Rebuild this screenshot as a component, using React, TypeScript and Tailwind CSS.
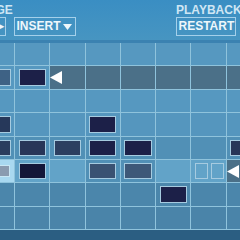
import React from "react";

type Cell = { note?: string; bg?: string; tri?: boolean; small?: boolean; sel?: boolean };

const D = "#1c2048";

const rows: Cell[][] = [
  [{}, {}, {}, {}, {}, {}, {}, {}],
  [
    { note: "#3e6285" },
    { note: D },
    { tri: true, bg: "#4b7088" },
    { bg: "#4b7088" },
    { bg: "#4b7088" },
    { bg: "#4b7088" },
    { bg: "#4b7088" },
    { bg: "#4b7088" },
  ],
  [{}, {}, {}, {}, {}, {}, {}, {}],
  [{ note: "#26385a" }, {}, {}, { note: D }, {}, {}, {}, {}],
  [
    { note: "#2a3d5e" },
    { note: "#283658" },
    { note: "#2c3f60" },
    { note: D },
    { note: D },
    {},
    {},
    { note: "#283658" },
  ],
  [
    { sel: true, bg: "#a8d8f0" },
    { note: "#141638", bg: "#62a3c8" },
    { bg: "#62a3c8" },
    { note: "#3a5272" },
    { note: "#3d5878" },
    { bg: "#62a3c8" },
    { small: true, bg: "#62a3c8" },
    { tri: true, bg: "#4b7088" },
  ],
  [{}, {}, {}, {}, {}, { note: D }, {}, {}],
  [{}, {}, {}, {}, {}, {}, {}, {}],
];

const rowBg = ["#5698c0", "#5698c0", "#5698c0", "#5596be", "#5190b6", "#5190b6", "#4b86ab", "#4a84a9"];

function Tri() {
  return (
    <svg width="12" height="13" viewBox="0 0 12 13" className="shrink-0">
      <polygon points="0,6.5 12,0 12,13" fill="#ffffff" />
    </svg>
  );
}

function GridCell({ c, bg }: { c: Cell; bg: string }) {
  return (
    <div
      className="h-[23.4px] border-r border-b border-[#8fc3dc] flex items-stretch px-[3.5px] py-[3px]"
      style={{ backgroundColor: c.bg ?? bg }}
    >
      {c.note && (
        <div className="flex-1 border-[1.5px] border-[#a6cbe0]" style={{ backgroundColor: c.note }} />
      )}
      {c.sel && <div className="flex-1 mr-[1px] my-[2px] border-[1.5px] border-[#c8e6f4] bg-[#8a9bb0]" />}
      {c.tri && (
        <div className="flex items-center -ml-[3.5px]">
          <Tri />
        </div>
      )}
      {c.small && (
        <div className="flex-1 flex gap-[3px] pl-[0.5px]">
          <div className="w-[13px] border-[1.5px] border-[#a6cbe0]" />
          <div className="w-[13px] border-[1.5px] border-[#a6cbe0]" />
        </div>
      )}
    </div>
  );
}

export default function App() {
  const font = { fontFamily: '"Liberation Sans", Arial, sans-serif' };
  return (
    <div className="w-[240px] h-[240px] overflow-hidden flex flex-col bg-[#3a8ec2]" style={font}>
      <div className="h-[40px] shrink-0 bg-gradient-to-b from-[#3a8ec3] to-[#4795c1] flex justify-between">
        <div className="flex flex-col ml-[-30.6px] pt-[3.8px]">
          <div className="text-[12px] font-bold text-[#cfe6f4] leading-[13.8px]">RANGE</div>
          <div className="flex gap-[8px] mt-[-0.6px]">
            <div className="w-[36.6px] h-[19px] border-[1.5px] border-[#a4d0ea] flex items-center justify-end pr-[1px] text-[12px] font-bold text-[#eef7fb]">
              <span className="text-[9px]">▶</span>
            </div>
            <div className="h-[19px] border-[1.5px] border-[#a4d0ea] flex items-center pl-[1.5px] pr-[3px] text-[12px] font-bold text-[#eef7fb] leading-[13.8px]">
              <span>INSERT</span>
              <svg width="9" height="6" viewBox="0 0 9 6" className="ml-[2px]">
                <polygon points="0,0 9,0 4.5,6" fill="#eef7fb" />
              </svg>
            </div>
          </div>
        </div>
        <div className="flex flex-col pt-[3.8px] w-[64px]">
          <div className="text-[12px] font-bold text-[#cfe6f4] leading-[13.8px] whitespace-nowrap">PLAYBACK</div>
          <div className="flex mt-[-0.6px]">
            <div className="h-[19px] border-[1.5px] border-[#a4d0ea] flex items-center pl-[1.5px] pr-[1px] text-[12px] font-bold text-[#eef7fb] leading-[13.8px]">
              RESTART
            </div>
          </div>
        </div>
      </div>
      <div className="h-[3px] shrink-0 bg-[#3b82b1]" />
      <div className="grid grid-cols-[repeat(8,35.3px)] ml-[-20.3px] shrink-0">
        {rows.map((r, i) =>
          r.map((c, j) => <GridCell key={`${i}-${j}`} c={c} bg={rowBg[i]} />)
        )}
      </div>
      <div className="flex-1 bg-[#2b5e82]" />
    </div>
  );
}
